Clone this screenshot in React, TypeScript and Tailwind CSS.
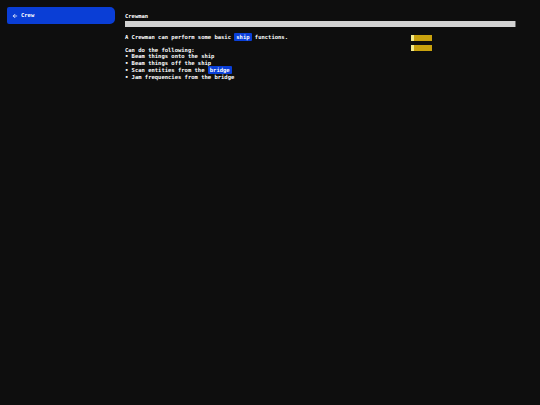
import { ArrowLeft } from "lucide-react";

const mono = { fontFamily: '"DejaVu Sans Mono", "Liberation Mono", monospace' };

function Hl({ children }: { children: string }) {
  return <span className="bg-[#0a3fd8] px-[2px] py-[1px] rounded-[1px]">{children}</span>;
}

function YellowBtn() {
  return (
    <div className="flex h-[6px] w-[21px]">
      <div className="w-[3px] bg-[#f3ea8a]" />
      <div className="flex-1 bg-[#c9a20e]" />
    </div>
  );
}

export default function App() {
  return (
    <div className="min-h-[405px] w-full bg-[#0e0e0e] text-white font-bold flex" style={mono}>
      <aside className="w-[125px] shrink-0 pt-[7px] pl-[7px]">
        <div className="flex items-center gap-[3px] h-[17px] w-[108px] bg-[#0a3ed6] rounded-l-[2px] rounded-r-[5px] pl-[5px] text-[5.5px]">
          <ArrowLeft className="w-[6px] h-[6px]" strokeWidth={3} />
          <span>Crew</span>
        </div>
      </aside>
      <main className="w-[391px] pt-[12.5px] text-[5.5px] leading-[6.6px]">
        <div className="mb-[1.5px]">Crewman</div>
        <div className="h-[6px] bg-[#d2d2d2] border-r border-[#6a6a6a]" />
        <div className="flex mt-[7px]">
          <div className="flex-1">
            <p>
              A Crewman can perform some basic <Hl>ship</Hl> functions.
            </p>
            <p className="mt-[6.6px]">Can do the following:</p>
            <p>• Beam things onto the ship</p>
            <p>• Beam things off the ship</p>
            <p className="my-[0.3px]">
              • Scan entities from the <Hl>bridge</Hl>
            </p>
            <p>• Jam frequencies from the bridge</p>
          </div>
          <div className="flex flex-col gap-[4px] pt-[1px] mr-[84px]">
            <YellowBtn />
            <YellowBtn />
          </div>
        </div>
      </main>
    </div>
  );
}
